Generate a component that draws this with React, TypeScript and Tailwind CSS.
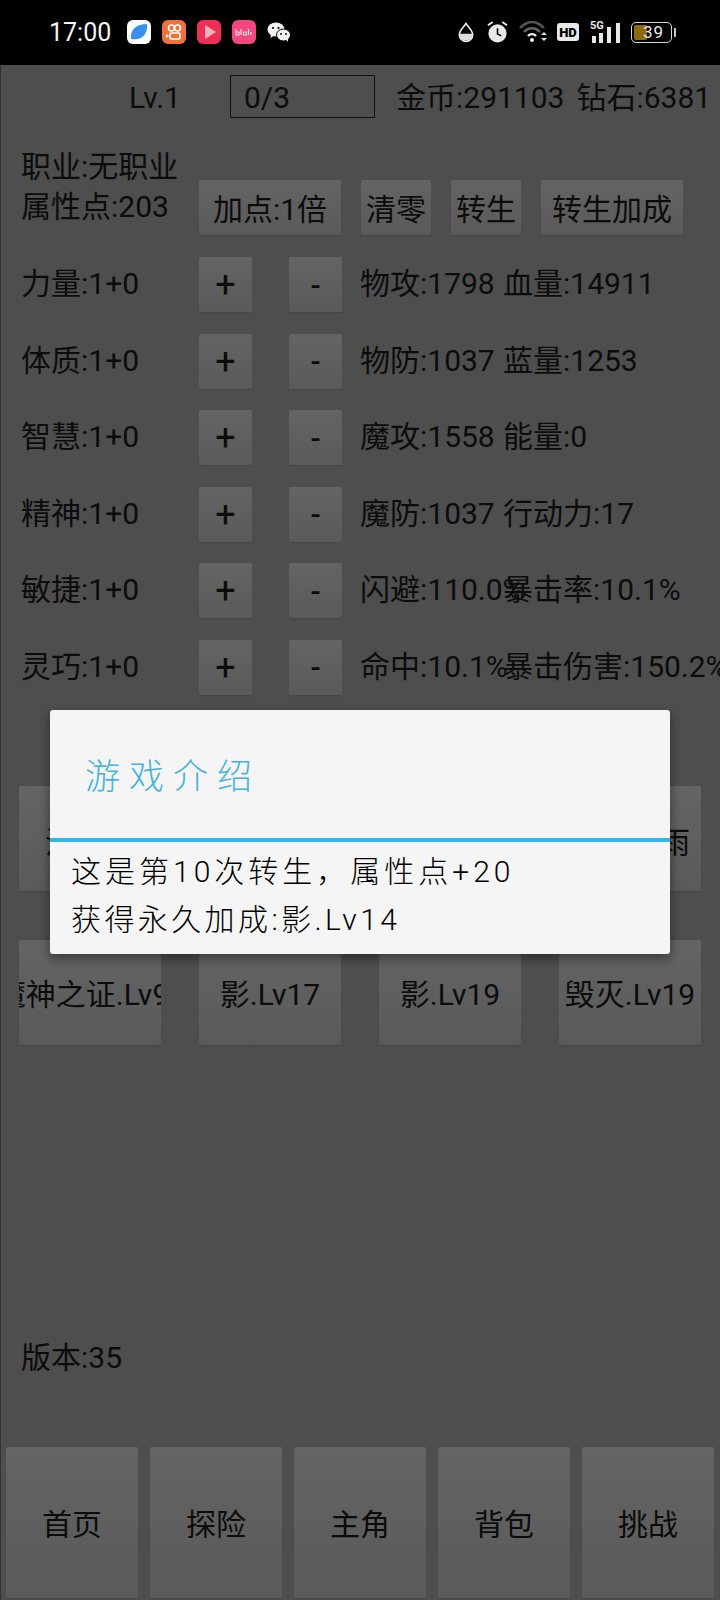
import React from 'react';

const FONT = 'font-["Roboto","Noto_Sans_CJK_SC",sans-serif]';

const Btn: React.FC<{ w: string; h?: string; children?: React.ReactNode; bold?: boolean; pt?: string }> = ({ w, h = 'h-[55px]', children, bold, pt = 'pt-[4px]' }) => (
  <div className={`${w} ${h} ${pt} shrink-0 overflow-hidden rounded-[2px] bg-gradient-to-b from-[#646464] to-[#5a5a5a] shadow-[0_1px_1px_rgba(0,0,0,0.1)] flex items-center justify-center whitespace-nowrap text-[30px] text-[#0c0c0c] ${bold ? 'font-medium' : ''}`}>
    {children}
  </div>
);

const stats = [
  ['力量:1+0', '物攻:1798', '血量:14911'],
  ['体质:1+0', '物防:1037', '蓝量:1253'],
  ['智慧:1+0', '魔攻:1558', '能量:0'],
  ['精神:1+0', '魔防:1037', '行动力:17'],
  ['敏捷:1+0', '闪避:110.0%', '暴击率:10.1%'],
  ['灵巧:1+0', '命中:10.1%', '暴击伤害:150.2%'],
];

const StatusIcons = () => (
  <div className="flex items-center">
    {/* app notification icons */}
    <svg width="24" height="24" viewBox="0 0 24 24" className="ml-[16px]">
      <rect width="24" height="24" rx="6" fill="#fbfdff" />
      <path d="M4 19 C3 9 10 4 20 4 C21 14 15 21 4 19Z" fill="#3b8fef" />
    </svg>
    <svg width="24" height="24" viewBox="0 0 24 24" className="ml-[11px]">
      <rect width="24" height="24" rx="6" fill="#f0703a" />
      <circle cx="9.5" cy="8" r="3" fill="none" stroke="#fff" strokeWidth="1.6" />
      <circle cx="15.5" cy="8" r="3" fill="none" stroke="#fff" strokeWidth="1.6" />
      <rect x="8" y="13" width="10" height="6" rx="1.5" fill="none" stroke="#fff" strokeWidth="1.6" />
      <path d="M4 14 L7 16 L4 18Z" fill="#fff" />
    </svg>
    <svg width="24" height="24" viewBox="0 0 24 24" className="ml-[11px]">
      <rect width="24" height="24" rx="6" fill="#ee3058" />
      <path d="M8 5 L19 12 L8 19Z" fill="#f9b3c0" />
    </svg>
    <svg width="24" height="24" viewBox="0 0 24 24" className="ml-[11px]">
      <rect width="24" height="24" rx="6" fill="#f4477f" />
      <path d="M4 9v6h3v-3H4M9 9v6M11.500 12v3h3v-3h-3M16.500 9v6M19 12v3" fill="none" stroke="#ffe3ec" strokeWidth="1.100" />
    </svg>
    <svg width="24" height="22" viewBox="0 0 24 22" className="ml-[11px]">
      <ellipse cx="9" cy="8.500" rx="8.500" ry="7" fill="#f2f2f2" />
      <path d="M4 13 L3.500 17 L8 14Z" fill="#f2f2f2" />
      <ellipse cx="16.500" cy="14" rx="7" ry="6" fill="#f2f2f2" stroke="#000" strokeWidth="1" />
      <path d="M19 18.500 L21 21 L21 17Z" fill="#f2f2f2" />
      <circle cx="6" cy="7" r="1.100" fill="#000" />
      <circle cx="11.500" cy="7" r="1.100" fill="#000" />
      <circle cx="14" cy="13" r="0.900" fill="#000" />
      <circle cx="19" cy="13" r="0.900" fill="#000" />
    </svg>
  </div>
);

const RightIcons = () => (
  <div className="flex items-center">
    <svg width="16" height="22" viewBox="0 0 18 22">
      <path d="M9 1.500 C6 6 1.500 9.500 1.500 14 A7.500 7.500 0 0 0 16.500 14 C16.500 9.500 12 6 9 1.500Z" fill="none" stroke="#eeeeee" strokeWidth="1.800" />
      <path d="M1.500 13 H16.500 A7.500 7.500 0 0 1 1.500 13Z" fill="#dedede" />
    </svg>
    <svg width="21" height="24" viewBox="0 0 22 24" className="ml-[13px]">
      <circle cx="11" cy="13.500" r="9.500" fill="#e8e8e8" />
      <path d="M11 8 V14 L15 16" fill="none" stroke="#000" strokeWidth="1.600" />
      <path d="M1 5 L6 1.500 M21 5 L16 1.500" stroke="#e8e8e8" strokeWidth="2" />
    </svg>
    <svg width="30" height="22" viewBox="0 0 30 22" className="ml-[11px]">
      <path d="M1 7 C9 -1 17 -1 25 7" fill="none" stroke="#555" strokeWidth="2.400" />
      <path d="M5 11 C10 6 16 6 21 11" fill="none" stroke="#666" strokeWidth="2.400" />
      <path d="M9 15 C11 12.500 15 12.500 17 15" fill="none" stroke="#eeeeee" strokeWidth="2.400" />
      <circle cx="13" cy="19" r="2" fill="#eeeeee" />
      <path d="M22 14 L25 11 L28 14Z M22 17 L25 20 L28 17Z" fill="#dddddd" />
    </svg>
    <div className="ml-[8px] flex h-[18px] w-[22px] items-center justify-center rounded-[3px] bg-[#e8e8e8] font-['Roboto'] text-[13px] font-black leading-none text-black">HD</div>
    <div className="relative ml-[11px] h-[22px] w-[31px]">
      <span className="absolute left-0 top-[-1px] font-['Roboto'] text-[11px] font-bold leading-none text-[#e8e8e8]">5G</span>
      <div className="absolute bottom-0 left-[2px] h-[7px] w-[4px] bg-[#e8e8e8]" />
      <div className="absolute bottom-0 left-[9px] h-[10px] w-[4px] bg-[#e8e8e8]" />
      <div className="absolute bottom-0 left-[17px] h-[16px] w-[4px] bg-[#e8e8e8]" />
      <div className="absolute bottom-0 left-[26px] h-[20px] w-[4px] bg-[#e8e8e8]" />
    </div>
    <div className="ml-[10px] flex items-center">
      <div className="relative h-[21px] w-[41px] overflow-hidden rounded-[5px] border border-[#d8d8d8] p-[2px]">
        <div className="h-full w-[13px] rounded-[2px] bg-[#8d6a10]" />
        <span className="absolute inset-y-0 left-[11px] flex items-center font-['Roboto'] text-[17px] leading-none tracking-[1px] text-[#e8e8e8]">39</span>
      </div>
      <div className="ml-[2px] h-[9px] w-[2px] rounded-r-[1px] bg-[#c8c8c8]" />
    </div>
  </div>
);

export default function App() {
  return (
    <div className={`relative flex h-[1600px] w-[720px] flex-col overflow-hidden bg-black ${FONT} text-[#0c0c0c]`}>
      <div className="flex h-[65px] shrink-0 items-center pb-[1px] pl-[49px] pr-[44px]">
        <span className="font-['Roboto'] text-[25px] leading-none text-[#f4f4f4]">17:00</span>
        <StatusIcons />
        <div className="flex-1" />
        <RightIcons />
      </div>

      <div className="flex flex-1 flex-col border-l border-[#333333] bg-[#4e4e4e] text-[30px]">
        <div className="mt-[10px] flex h-[43px] items-center leading-none">
          <span className="ml-[128px] w-[101px] pt-[3px]">Lv.1</span>
          <div className="flex h-[43px] w-[145px] items-center border border-[#111111] pl-[13px] pt-[3px]">0/3</div>
          <span className="ml-[21px] whitespace-nowrap pt-[3px]">金币:291103</span>
          <span className="ml-[12px] whitespace-nowrap pt-[3px]">钻石:6381</span>
        </div>

        <div className="mt-[28px] flex h-[91px] items-end">
          <div className="ml-[20px] w-[178px] self-start whitespace-nowrap pt-[1px] leading-[40px]">
            <div>职业:无职业</div>
            <div>属性点:203</div>
          </div>
          <div className="mb-[2px] flex gap-[20px]">
            <Btn w="w-[142px]">加点:1倍</Btn>
            <Btn w="w-[70px]">清零</Btn>
            <Btn w="w-[70px]">转生</Btn>
            <Btn w="w-[142px]">转生加成</Btn>
          </div>
        </div>

        <div className="mt-[20px] flex flex-col gap-[21.600px]">
          {stats.map(([name, a, b]) => (
            <div key={name} className="flex h-[55px] items-center whitespace-nowrap">
              <span className="ml-[20px] w-[178px] pb-[2px]">{name}</span>
              <Btn w="w-[53px]" pt="pt-[1px]"><span className="text-[36px] leading-none">+</span></Btn>
              <div className="ml-[37px]"><Btn w="w-[53px]" pt="pt-[1px]" bold>-</Btn></div>
              <div className="ml-[18px] flex min-w-0 flex-1 pb-[2px]">
                <span className="w-[143px] shrink-0">{a}</span>
                <span>{b}</span>
              </div>
            </div>
          ))}
        </div>

        <div className="mt-[91px] flex h-[105px] justify-between pl-[18px] pr-[19px]">
          <Btn w="w-[142px]" h="h-[105px]" pt="pt-[8px]">治疗术</Btn>
          <Btn w="w-[142px]" h="h-[105px]" pt="pt-[8px]">影.Lv17</Btn>
          <Btn w="w-[142px]" h="h-[105px]" pt="pt-[8px]">影.Lv19</Btn>
          <Btn w="w-[142px]" h="h-[105px]" pt="pt-[8px]">流星火雨</Btn>
        </div>

        <div className="mt-[49px] flex h-[105px] justify-between pl-[18px] pr-[19px]">
          <Btn w="w-[142px]" h="h-[105px]" pt="pt-[5px]"><span className="mr-[15px]">魔神之证.Lv9</span></Btn>
          <Btn w="w-[142px]" h="h-[105px]" pt="pt-[5px]">影.Lv17</Btn>
          <Btn w="w-[142px]" h="h-[105px]" pt="pt-[5px]">影.Lv19</Btn>
          <Btn w="w-[142px]" h="h-[105px]" pt="pt-[5px]">毁灭.Lv19</Btn>
        </div>

        <div className="ml-[20px] mt-[293px] leading-[40px]">版本:35</div>

        <div className="mt-[69px] flex justify-between pl-[5px] pr-[6px]">
          {['首页', '探险', '主角', '背包', '挑战'].map(t => (
            <Btn key={t} w="w-[132px]" h="h-[151px]" pt="pt-[5px]">{t}</Btn>
          ))}
        </div>
      </div>

      {/* dialog */}
      <div className="absolute left-[50px] top-[710px] h-[244px] w-[620px] rounded-[3px] bg-[#f5f5f5] shadow-[0_4px_12px_rgba(0,0,0,0.45)]">
        <div className="h-[128px] pl-[35px] pt-[46px] text-[35px] font-light leading-[44px] tracking-[9px] text-[#45b4dc]">游戏介绍</div>
        <div className="h-[4px] bg-[#33b5e5]" />
        <div className="pl-[21px] pt-[6px] text-[30px] font-light leading-[48px] text-black">
          <div className="tracking-[4px]">这是第10次转生，属性点+20</div>
          <div className="tracking-[3.400px]">获得永久加成:影.Lv14</div>
        </div>
      </div>
    </div>
  );
}
